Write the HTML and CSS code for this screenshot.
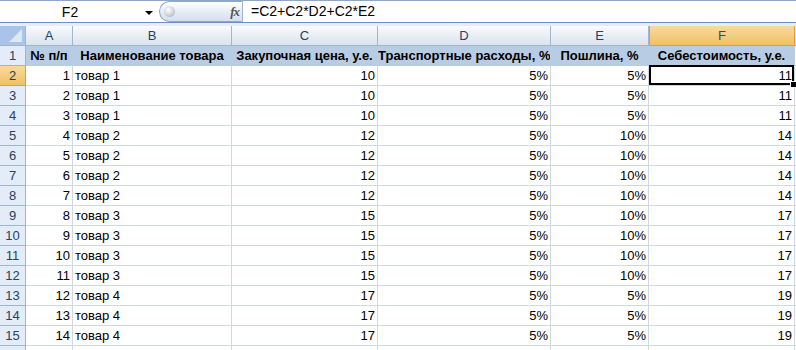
FILE: index.html
```html
<!DOCTYPE html>
<html>
<head>
<meta charset="utf-8">
<link rel="stylesheet" href="styles.css">
</head>
<body>
<div class="app">
  <div class="fbar">
    <div class="namebox"><span class="name">F2</span><span class="arrow"></span></div>
    <div class="pill"><span class="ball"></span><span class="fx">fx</span></div>
    <div class="formula">=C2+C2*D2+C2*E2</div>
  </div>
  <div class="gap"></div>
  <div class="sheet" id="sheet">
    <div class="ch corner"><span class="tri"></span></div>
    <div class="ch">A</div>
    <div class="ch">B</div>
    <div class="ch">C</div>
    <div class="ch">D</div>
    <div class="ch">E</div>
    <div class="ch sel">F</div>
    <div class="ch tail"></div>

    <div class="rh">1</div>
    <div class="c h">№ п/п</div>
    <div class="c h">Наименование товара</div>
    <div class="c h">Закупочная цена, у.е.</div>
    <div class="c h">Транспортные расходы, %</div>
    <div class="c h">Пошлина, %</div>
    <div class="c h">Себестоимость, у.е.</div>
    <div class="c tail"></div>
  </div>
</div>
<script src="script.js"></script>
</body>
</html>
```
FILE: script.js
```js
const data = [
  [1,"товар 1",10,"5%","5%",11],
  [2,"товар 1",10,"5%","5%",11],
  [3,"товар 1",10,"5%","5%",11],
  [4,"товар 2",12,"5%","10%",14],
  [5,"товар 2",12,"5%","10%",14],
  [6,"товар 2",12,"5%","10%",14],
  [7,"товар 2",12,"5%","10%",14],
  [8,"товар 3",15,"5%","10%",17],
  [9,"товар 3",15,"5%","10%",17],
  [10,"товар 3",15,"5%","10%",17],
  [11,"товар 3",15,"5%","10%",17],
  [12,"товар 4",17,"5%","5%",19],
  [13,"товар 4",17,"5%","5%",19],
  [14,"товар 4",17,"5%","5%",19],
  ["","","","","",""]
];
const sheet = document.getElementById("sheet");
data.forEach((row, i) => {
  const r = i + 2;
  const rh = document.createElement("div");
  rh.className = "rh" + (r === 2 ? " sel" : "");
  rh.textContent = r <= 15 ? r : "";
  sheet.appendChild(rh);
  row.forEach((v, j) => {
    const c = document.createElement("div");
    c.className = "c " + (j === 1 ? "l" : "r");
    c.textContent = v;
    if (r === 2 && j === 5) {
      c.classList.add("active");
      const b = document.createElement("span");
      b.className = "selbox";
      const h = document.createElement("span");
      h.className = "handle";
      c.appendChild(b);
      c.appendChild(h);
    }
    sheet.appendChild(c);
  });
  const t = document.createElement("div");
  t.className = "c tail";
  sheet.appendChild(t);
});
```
FILE: styles.css
```css
html, body {
  margin: 0;
  padding: 0;
  background: #fff;
}
body {
  width: 796px;
  height: 350px;
  overflow: hidden;
  font-family: "Liberation Sans", Arial, sans-serif;
  font-size: 13px;
}
.app {
  width: 796px;
}
.fbar {
  height: 23px;
  box-sizing: border-box;
  border-top: 1px solid #8da7c9;
  border-bottom: 1px solid #6f90bd;
  display: flex;
  background: #fff;
}
.namebox {
  width: 159px;
  display: flex;
  align-items: center;
}
.name {
  width: 140px;
  text-align: center;
  font-size: 14px;
  color: #000;
}
.arrow {
  width: 0;
  height: 0;
  border-left: 4px solid transparent;
  border-right: 4px solid transparent;
  border-top: 4px solid #000;
  margin-left: 5px;
  margin-top: 2px;
}
.pill {
  width: 84px;
  height: 21px;
  box-sizing: border-box;
  border: 1px solid #8ea8cb;
  border-right: 1px solid #9fb4d2;
  border-radius: 11px 0 0 11px;
  background: linear-gradient(#ffffff, #e4ecf6 55%, #d5e0ee);
  display: flex;
  align-items: center;
  justify-content: space-between;
  padding: 0 3px 0 4px;
}
.ball {
  width: 11px;
  height: 11px;
  border-radius: 50%;
  background: radial-gradient(circle at 40% 35%, #ffffff, #c9ced6 60%, #9aa2ad);
}
.fx {
  font-family: "Liberation Serif", serif;
  font-style: italic;
  font-weight: bold;
  font-size: 13px;
  color: #555;
  letter-spacing: -1px;
}
.formula {
  flex: 1;
  padding-left: 8px;
  font-size: 14px;
  line-height: 21px;
  color: #000;
}
.gap {
  height: 3px;
  background: #e6edf7;
}
.sheet {
  display: grid;
  grid-template-columns: 26px 47px 159px 146px 173px 98px 146px 1px;
  grid-auto-rows: 20px;
}
.sheet > div {
  box-sizing: border-box;
  border-right: 1px solid #d0d7e5;
  border-bottom: 1px solid #d0d7e5;
  line-height: 19px;
  white-space: nowrap;
  overflow: hidden;
  color: #000;
}
.sheet > .ch {
  background: linear-gradient(#f9fbfd, #e6ecf4 60%, #dce4ee);
  border-right: 1px solid #9eb6ce;
  border-bottom: 1px solid #9eb6ce;
  text-align: center;
  color: #27415f;
  font-size: 13px;
}
.sheet > .ch.sel {
  background: linear-gradient(#f9d99f, #f4cd83 50%, #f1c15f);
  border: 1px solid #f29536;
  border-top: none;
  color: #1c5c48;
}
.corner {
  position: relative;
}
.tri {
  position: absolute;
  right: 3px;
  bottom: 3px;
  width: 0;
  height: 0;
  border-left: 13px solid transparent;
  border-bottom: 13px solid #dfe7f2;
}
.sheet > .corner {
  background: #a9c4e9;
}
.sheet > .ch.tail, .sheet > .c.tail {
  border-right: none;
}
.sheet > .rh {
  background: #e4ecf7;
  border-right: 1px solid #9eb6ce;
  border-bottom: 1px solid #9eb6ce;
  text-align: center;
  color: #27415f;
  font-size: 13px;
}
.sheet > .rh.sel {
  background: linear-gradient(#f9d99f, #f1c15f);
  border-bottom: 1px solid #f29536;
  border-right: 1px solid #f29536;
}
.sheet > .c.h {
  background: #b8cce4;
  font-weight: bold;
  text-align: center;
  border-right-color: #b8cce4;
  border-bottom-color: #b8cce4;
}
.c.r {
  text-align: right;
  padding-right: 2px;
}
.c.l {
  text-align: left;
  padding-left: 2px;
}
.sheet > .c.active {
  position: relative;
  overflow: visible;
}
.selbox {
  position: absolute;
  left: 0;
  top: -1px;
  right: 0;
  bottom: 0;
  border: 2px solid #000;
}
.handle {
  position: absolute;
  right: -3px;
  bottom: -3px;
  width: 5px;
  height: 5px;
  background: #000;
  border: 1px solid #fff;
}
```
